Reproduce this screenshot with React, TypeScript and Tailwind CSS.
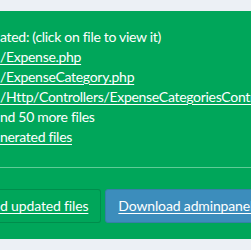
const lines = [
  { text: "ated: (click on file to view it)", link: false },
  { text: "/Expense.php", link: true },
  { text: "/ExpenseCategory.php", link: true },
  { text: "/Http/Controllers/ExpenseCategoriesController.php", link: true },
  { text: "nd 50 more files", link: false },
  { text: "nerated files", link: true },
];

export default function App() {
  return (
    <div
      className="min-h-screen bg-[#ecf0f5] pt-[11px] overflow-hidden"
      style={{ fontFamily: "Lato, 'Noto Sans', sans-serif" }}
    >
      <div className="bg-[#00a65a] text-white text-[14px] leading-[20px] tracking-[-0.3px] pt-[16px] pb-[16px]">
        <div className="flex flex-col whitespace-nowrap">
          {lines.map((l) =>
            l.link ? (
              <a key={l.text} href="#" className="underline underline-offset-2">
                {l.text}
              </a>
            ) : (
              <span key={l.text}>{l.text}</span>
            )
          )}
        </div>
        <div className="mt-[20px] mb-[21px] border-t border-[#5fcb96]" />
        <div className="flex gap-[4px] whitespace-nowrap tracking-[-0.15px]">
          <a
            href="#"
            className="block rounded-r-[3px] border border-l-0 border-[#008d4c] bg-[#00a65a] pr-[12px] py-[6px] underline underline-offset-2"
          >
            d updated files
          </a>
          <a
            href="#"
            className="block rounded-[3px] border border-[#367fa9] bg-[#3c8dbc] px-[12px] py-[6px] underline underline-offset-2"
          >
            Download adminpanel.zip
          </a>
        </div>
      </div>
    </div>
  );
}
